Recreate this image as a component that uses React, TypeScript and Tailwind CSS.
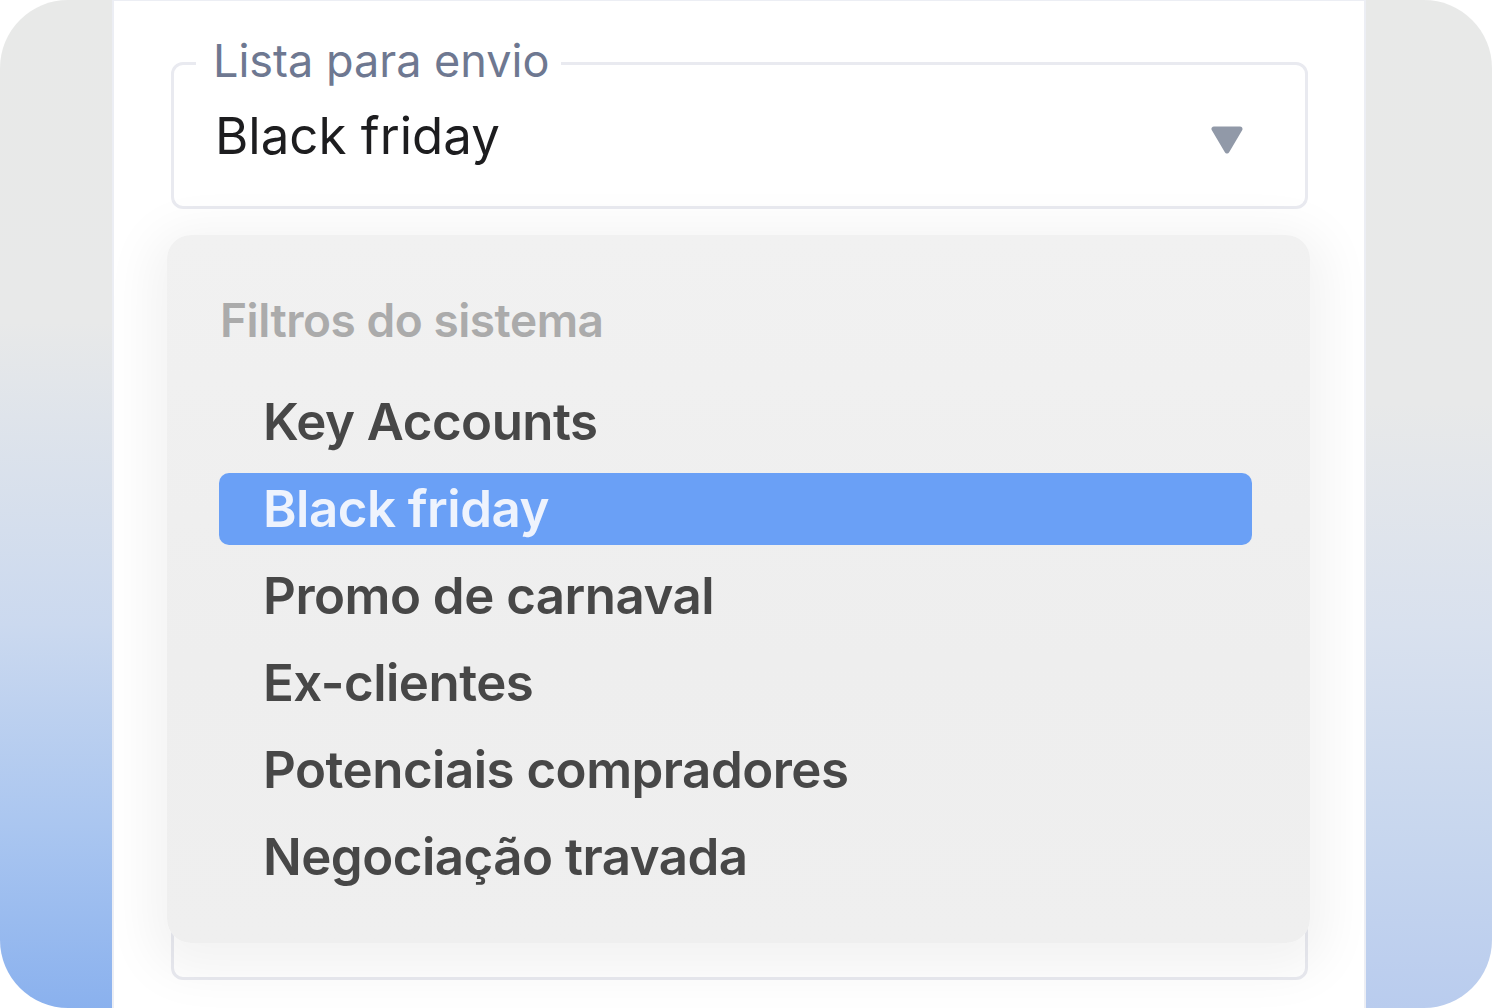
import React from 'react';

const lists = [
  'Key Accounts',
  'Black friday',
  'Promo de carnaval',
  'Ex-clientes',
  'Potenciais compradores',
  'Negociação travada',
];

function Caret() {
  return (
    <svg width="34" height="28" viewBox="0 0 34 28" className="block">
      <path
        d="M4 3 L30 3 L17 25 Z"
        fill="#9199a8"
        stroke="#9199a8"
        strokeWidth="5"
        strokeLinejoin="round"
      />
    </svg>
  );
}

export default function App() {
  const selected = 'Black friday';

  return (
    <div className="w-[1492px] h-[1008px] bg-white" style={{ fontFamily: 'Inter, "Noto Sans", sans-serif' }}>
      <div className="flex w-full h-full rounded-[68px] overflow-hidden">
        {/* left backdrop */}
        <div className="w-[112px] shrink-0 bg-[linear-gradient(to_bottom,#e8e9e8_0%,#e8e9e9_32%,#cbd9ef_62%,#aac6f0_82%,#8ab1ee_100%)]" />

        {/* panel */}
        <div className="w-[1254px] shrink-0 bg-white border-x-2 border-t border-[#eceef4] pt-[32px] pl-[57px] pr-[56px]">
          <div className="relative">
            <fieldset className="border-[3px] border-[#e9eaf0] rounded-[12px] p-0 m-0">
              <legend className="ml-[22px] pl-[17px] pr-[12px] pb-[6px] text-[45px] leading-[55px] text-[#6e7891]">
                Lista para envio
              </legend>
              <div className="flex items-center justify-between pl-[41px] pr-[61px] pt-[10px] pb-[39px]">
                <span className="text-[51px] leading-[63px] text-[#1d1d1f]">{selected}</span>
                <div className="mt-[8px]">
                  <Caret />
                </div>
              </div>
            </fieldset>

            {/* dropdown menu */}
            <div className="absolute left-[-4px] top-[202px] w-[1143px] z-10 rounded-[24px] bg-[linear-gradient(to_bottom,#f1f1f1,#eeeeee_60%,#efefef)] shadow-[0_12px_50px_18px_rgba(0,0,0,0.05)] pt-[56px] pb-[50px] pl-[52px] pr-[58px]">
              <div className="text-[46px] leading-[58px] font-semibold tracking-[-0.01em] text-[#ababab] pl-[1px]">
                Filtros do sistema
              </div>
              <ul className="mt-[37px] flex flex-col gap-[15px]">
                {lists.map((name) => {
                  const active = name === selected;
                  return (
                    <li
                      key={name}
                      className={
                        active
                          ? 'h-[72px] rounded-[10px] bg-[#6aa0f6] pl-[44px] text-[51px] leading-[72px] font-semibold tracking-[-0.01em] text-[#eef3fd]'
                          : 'h-[72px] rounded-[10px] pl-[44px] text-[51px] leading-[72px] font-semibold tracking-[-0.01em] text-[#474747]'
                      }
                    >
                      {name}
                    </li>
                  );
                })}
              </ul>
            </div>

            {/* next field, hidden behind the menu */}
            <div className="mt-[626px] h-[145px] border-[3px] border-[#e9eaf0] rounded-[12px]" />
          </div>
        </div>

        {/* right backdrop */}
        <div className="flex-1 bg-[linear-gradient(to_bottom,#e8e9e8_0%,#e8e9e9_40%,#d9e1ee_62%,#c8d7ee_82%,#b9ccee_100%)]" />
      </div>
    </div>
  );
}
